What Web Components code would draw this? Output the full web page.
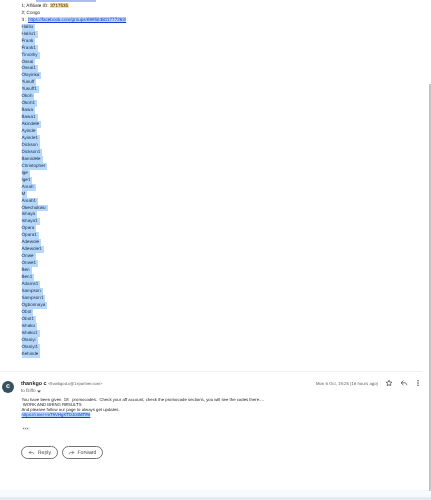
<!DOCTYPE html>
<html><head><meta charset="utf-8"><style>
html,body{margin:0;height:100%;overflow:hidden;background:#fff}
body{font-family:"Liberation Sans",Arial,sans-serif;color:#222;text-rendering:geometricPrecision}
</style></head><body>
<mail-page>
  <mail-body slot="top"></mail-body>
  <mail-reply slot="bottom"></mail-reply>
</mail-page>
<script>
const NAMES="Halilu Halilu1 Frank Frank1 Timothy Ossai Ossai1 Olayinka Yusuff Yusuff1 Okoh Okoh1 Bawa Bawa1 Akindele Ayinde Ayinde1 Dickson Dickson1 Bamidele Christopher Ige Ige1 Amah M Amah1 Okechukwu Ishaya Ishaya1 Opara Opara1 Adewole Adewole1 Onwe Onwe1 Ben Ben1 Adams1 Sampson Sampson1 Ogbonnaya Obot Obot1 Ishaku Ishaku1 Olaniyi Olaniyi1 Kehinde".split(" ");
class MailPage extends HTMLElement{constructor(){super();this.attachShadow({mode:"open"}).innerHTML=`<style>
:host{display:flex;flex-direction:column;width:431px;height:500px;position:relative;overflow:hidden;background:#fff}
.main{flex:1;min-height:0;display:flex;flex-direction:column}
.foot{height:3px;background:#e3eaf4}
.band{height:7px;background:#f8f9fb}
.bar{position:absolute;right:0;top:84px;width:2px;height:407px;background:#c4c4c4}
</style><div class="main"><slot name="top"></slot><slot name="bottom"></slot></div><div class="band"></div><div class="foot"></div><div class="bar"></div>`}}
class MailBody extends HTMLElement{constructor(){super();this.attachShadow({mode:"open"}).innerHTML=`<style>
:host{display:block;padding-left:21.5px;font-size:4.6px;line-height:6.96px;color:#222;filter:blur(.25px)}
.clip{height:2.9px;overflow:hidden;padding-left:14.5px}
.clip span{display:block;width:60px;height:1.6px;background:#aebcf0}
.r{height:6.96px;white-space:nowrap}
mark{background:#fce29a;color:#222;padding:0 .5px}
a{color:#1a3fd0;text-decoration:underline}
.s{display:inline-block;background:#b5d8fe;padding-right:2px;color:#2a2f38}
.sel{background:#b5d8fe}
</style>
<div class="clip"><span></span></div>
<div class="r">1; Affiliate ID: <mark>3717535</mark></div>
<div class="r">2; Congo</div>
<div class="r">3 : <a class="sel" href="#">https://facebook.com/groups/699563811777263/</a></div>
${NAMES.map(n=>`<div class="r"><span class="s">${n}</span></div>`).join("")}`}}
class MailReply extends HTMLElement{constructor(){super();this.attachShadow({mode:"open"}).innerHTML=`<style>
:host{display:block;margin-top:13.300px;font-size:4.3px;color:#222;flex:none}
.rule{height:1px;width:422px;background:#f0f1f2}
.wrap{filter:blur(.25px)}
.head{display:flex;align-items:flex-start;padding:4px 0 0 2px;height:25px;box-sizing:border-box}
.av{width:12px;height:12px;border-radius:50%;background:#34515f;color:#fff;font-size:7px;line-height:12px;text-align:center;font-weight:700;margin:5px 7px 0 0;flex:none}
.who{flex:1;padding-top:4px;line-height:7px}
.who b{font-size:5.4px;font-weight:700;color:#1f1f1f}
.who small{font-size:4.1px;color:#5e5e5e}
.to{font-size:4.6px;color:#5e5e5e;line-height:6px;margin-top:.5px;display:flex;align-items:center;gap:1.5px}
.right{display:flex;align-items:center;padding-top:1.5px;height:12px;color:#5e5e5e;font-size:4.3px;margin-right:9px}
.right svg{display:block}
.date{margin-right:7px}
.content{padding:0 0 0 21.5px;font-size:4.3px;line-height:5.1px;color:#222;white-space:pre-wrap}
.content a{display:inline-block;color:#1a3fd0;background:#b5d8fe}
.more{display:flex;width:8px;height:3.5px;margin-top:9.5px;background:#e8eaed;border-radius:2px;align-items:center;justify-content:center;gap:.7px}
.more i{width:.9px;height:.9px;background:#444;border-radius:50%}
.btns{display:flex;gap:3.5px;margin:16px 0 0 21px}
</style>
<div class="rule"></div><div class="wrap">
<div class="head"><div class="av">c</div><div class="who"><b>thankgo c</b> <small>&lt;thankgod.c@1xpartner.com&gt;</small><div class="to">to Diffo <svg width="4" height="3" viewBox="0 0 4 3"><path d="M0 .5h4L2 2.8z" fill="#5e5e5e"/></svg></div></div>
<div class="right"><span class="date">Mon 6 Oct, 19:25 (16 hours ago)</span>
<svg width="8" height="8" viewBox="0 0 24 24" fill="none" stroke="#444" stroke-width="2.2" style="margin-right:6.500px"><path d="M12 3.5l2.6 5.6 6.1.7-4.5 4.2 1.2 6L12 17l-5.4 3 1.2-6-4.5-4.2 6.1-.7z"/></svg>
<svg width="8" height="8" viewBox="0 0 24 24" fill="none" stroke="#444" stroke-width="2.2" style="margin-right:6.500px"><path d="M10 5l-7 6.5 7 6.5M3 11.500h11c4 0 6 2.500 6 7"/></svg>
<svg width="8" height="8" viewBox="0 0 24 24" fill="#444"><circle cx="12" cy="5" r="2.300"/><circle cx="12" cy="12" r="2.300"/><circle cx="12" cy="19" r="2.300"/></svg></div></div>
<div class="content">You have been given  18   promocodes.  Check your aff account, check the promocode sections, you will see the codes there....
 WORK AND BRING RESULTS
And pleasee follow our page to always get updates.
<a href="#">https://t.me/+mT9VHgKTDJ04MTE6</a><div class="more"><i></i><i></i><i></i></div></div>
<div class="btns"><pill-btn style="width:37px" label="Reply" icon="reply"></pill-btn><pill-btn style="width:41px" label="Forward" icon="forward"></pill-btn></div></div>`}}
class PillBtn extends HTMLElement{constructor(){super();const f=this.getAttribute("icon")=="forward";this.attachShadow({mode:"open"}).innerHTML=`<style>
:host{display:inline-flex;align-items:center;justify-content:center;height:13px;gap:2.800px;border:.7px solid #6f7276;border-radius:7px;font-size:5.200px;color:#444;box-sizing:border-box}
svg{display:block}
</style><svg width="7" height="7" viewBox="0 0 24 24" fill="none" stroke="#444" stroke-width="2" style="${f?"transform:scaleX(-1)":""}"><path d="M10 6l-6 6 6 6M4 12h11c3 0 5 2 5 6"/></svg><span>${this.getAttribute("label")}</span>`}}
customElements.define("mail-page",MailPage);
customElements.define("mail-body",MailBody);
customElements.define("mail-reply",MailReply);
customElements.define("pill-btn",PillBtn);
</script></body></html>
